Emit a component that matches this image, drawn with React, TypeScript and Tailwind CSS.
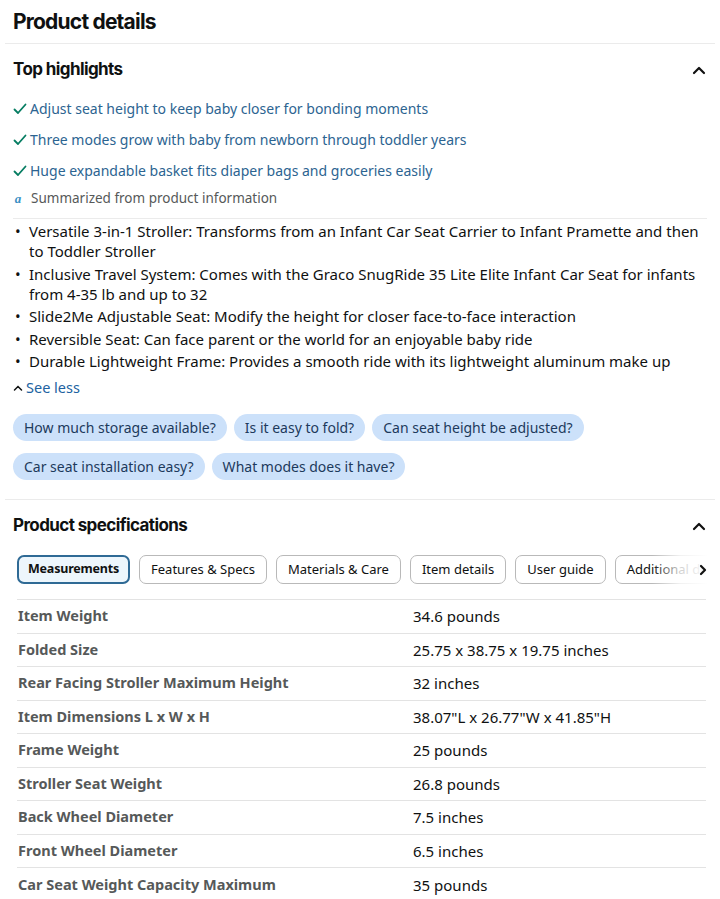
const highlights = [
  'Adjust seat height to keep baby closer for bonding moments',
  'Three modes grow with baby from newborn through toddler years',
  'Huge expandable basket fits diaper bags and groceries easily',
];

const bullets = [
  'Versatile 3-in-1 Stroller: Transforms from an Infant Car Seat Carrier to Infant Pramette and then to Toddler Stroller',
  'Inclusive Travel System: Comes with the Graco SnugRide 35 Lite Elite Infant Car Seat for infants from 4-35 lb and up to 32',
  'Slide2Me Adjustable Seat: Modify the height for closer face-to-face interaction',
  'Reversible Seat: Can face parent or the world for an enjoyable baby ride',
  'Durable Lightweight Frame: Provides a smooth ride with its lightweight aluminum make up',
];

const questions = [
  ['How much storage available?', 'Is it easy to fold?', 'Can seat height be adjusted?'],
  ['Car seat installation easy?', 'What modes does it have?'],
];

const tabs = ['Measurements', 'Features & Specs', 'Materials & Care', 'Item details', 'User guide', 'Additional details'];

const specs: [string, string][] = [
  ['Item Weight', '34.6 pounds'],
  ['Folded Size', '25.75 x 38.75 x 19.75 inches'],
  ['Rear Facing Stroller Maximum Height', '32 inches'],
  ['Item Dimensions L x W x H', '38.07"L x 26.77"W x 41.85"H'],
  ['Frame Weight', '25 pounds'],
  ['Stroller Seat Weight', '26.8 pounds'],
  ['Back Wheel Diameter', '7.5 inches'],
  ['Front Wheel Diameter', '6.5 inches'],
  ['Car Seat Weight Capacity Maximum', '35 pounds'],
];

const body = { fontFamily: '"Noto Sans", "Open Sans", sans-serif' };
const heading = { fontFamily: 'Inter, "Noto Sans", sans-serif' };

function ChevronUp() {
  return (
    <svg width="14" height="10" viewBox="0 0 14 10" className="text-[#111]">
      <polyline points="2,8 7,3 12,8" fill="none" stroke="currentColor" strokeWidth="2.2" strokeLinecap="round" strokeLinejoin="round" />
    </svg>
  );
}

function Check() {
  return (
    <svg width="14" height="12" viewBox="0 0 14 12" className="shrink-0">
      <polyline points="1.5,6.5 5,10 12.5,1.5" fill="none" stroke="#067D62" strokeWidth="1.8" strokeLinecap="round" strokeLinejoin="round" />
    </svg>
  );
}

function SectionHeader({ title }: { title: string }) {
  return (
    <div className="h-[52px] flex items-center justify-between pl-[13px] pr-[14px]">
      <h2 style={heading} className="text-[17px] font-bold tracking-[-0.6px] text-[#0f1111]">{title}</h2>
      <ChevronUp />
    </div>
  );
}

export default function App() {
  return (
    <div style={body} className="w-[720px] h-[899px] overflow-hidden bg-white text-[#0f1111]">
      <div className="h-[44px] flex items-center px-[13px] mx-[5px] border-b border-[#ebebeb]">
        <h1 style={heading} className="-ml-[5px] text-[21px] font-bold tracking-[-0.8px] leading-none">Product details</h1>
      </div>

      {/* top highlights */}
      <SectionHeader title="Top highlights" />
      <div className="px-[13px] -mt-[3px]">
        {highlights.map((h) => (
          <div key={h} className="h-[31px] flex items-center gap-[3px] text-[14px] text-[#2c6491]">
            <Check />
            <span>{h}</span>
          </div>
        ))}
        <div className="h-[25px] flex items-center gap-[8px] text-[13.5px] text-[#565959]">
          <span className="w-[10px] text-center italic font-bold text-[13px] text-[#3a8fc4]" style={{ fontFamily: 'Georgia, "Liberation Serif", serif' }}>a</span>
          <span>Summarized from product information</span>
        </div>
      </div>
      <div className="mt-[7px] mx-[13px] border-t border-[#ebebeb]" />

      <ul className="pt-[2px] pl-[13px] pr-[16px] flex flex-col gap-[2.5px]">
        {bullets.map((b) => (
          <li key={b} className="flex text-[15px] leading-[20px] text-[#0f1111]">
            <span className="w-[16px] shrink-0 pl-[2px]">•</span>
            <span>{b}</span>
          </li>
        ))}
      </ul>
      <div className="mt-[7px] h-[20px] pl-[13px] flex items-center gap-[3px] text-[14.5px] text-[#2162a1]">
        <svg width="10" height="8" viewBox="0 0 10 8">
          <polyline points="1.5,6 5,2.5 8.5,6" fill="none" stroke="#0f1111" strokeWidth="1.5" strokeLinecap="round" />
        </svg>
        <span>See less</span>
      </div>

      <div className="mt-[16px] px-[13px] flex flex-col gap-[12px]">
        {questions.map((row, i) => (
          <div key={i} className="flex gap-[7px]">
            {row.map((q) => (
              <span key={q} className="h-[27px] px-[11px] flex items-center rounded-full bg-[#cce1fa] text-[14px] text-[#1d3a5c]">
                {q}
              </span>
            ))}
          </div>
        ))}
      </div>
      <div className="mt-[19px] mx-[5px] border-t border-[#ebebeb]" />

      {/* product specifications */}
      <SectionHeader title="Product specifications" />
      <div className="relative mt-[3px] ml-[17px] mr-[12px] overflow-hidden">
        <div className="flex gap-[9px]">
          {tabs.map((t, i) => (
            <span
              key={t}
              className={
                i === 0
                  ? 'h-[29px] px-[9px] shrink-0 flex items-center rounded-[7px] border-2 border-[#2f6a95] bg-[#edf6fc] text-[12.5px] font-bold tracking-[-0.2px] text-[#0f1111]'
                  : 'h-[29px] px-[11px] shrink-0 flex items-center rounded-[7px] border border-[#b9b9b9] text-[13px] text-[#0f1111]'
              }
            >
              {t}
            </span>
          ))}
        </div>
        <div className="absolute right-0 top-0 h-[29px] w-[56px] flex items-center justify-end bg-gradient-to-r from-transparent via-white/80 to-white">
          <svg width="10" height="12" viewBox="0 0 10 12">
            <polyline points="3,2 7,6 3,10" fill="none" stroke="#111" strokeWidth="2.2" strokeLinecap="round" strokeLinejoin="round" />
          </svg>
        </div>
      </div>

      <div className="mt-[15px] ml-[17px] mr-[14px] border-t border-[#e3e3e3]">
        {specs.map(([k, v], i) => (
          <div
            key={k}
            className={`h-[33.5px] grid grid-cols-[396px_1fr] items-center ${i < specs.length - 1 ? 'border-b border-[#e3e3e3]' : ''}`}
          >
            <span className="pl-[1px] text-[14.5px] font-bold text-[#565959]">{k}</span>
            <span className="text-[15px] text-[#0f1111]">{v}</span>
          </div>
        ))}
      </div>
    </div>
  );
}
